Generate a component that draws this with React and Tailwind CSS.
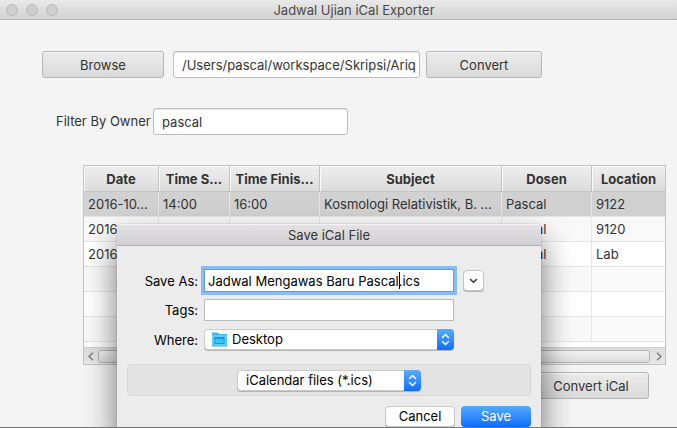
import React from "react";

const columns = [
  { title: "Date", width: "w-[75px]" },
  { title: "Time S...", width: "w-[71px]" },
  { title: "Time Finis...", width: "w-[90px]" },
  { title: "Subject", width: "" },
  { title: "Dosen", width: "w-[90px]" },
  { title: "Location", width: "w-[73px]" },
];

const rows = [
  ["2016-10...", "14:00", "16:00", "Kosmologi Relativistik, B. ...", "Pascal", "9122"],
  ["2016-10...", "", "", "", "Pascal", "9120"],
  ["2016-10...", "", "", "", "Pascal", "Lab"],
  ["", "", "", "", "", ""],
  ["", "", "", "", "", ""],
  ["", "", "", "", "", ""],
];

const rowColour = (i) => (i === 0 ? "bg-[#d1d1d1]" : i % 2 ? "bg-[#f9f9f9]" : "bg-white");

function GreyButton({ children, className }) {
  return (
    <button
      type="button"
      className={`h-[27px] shrink-0 rounded-[3px] border border-[#b5b5b5] bg-linear-to-b from-[#ececec] to-[#dadada] text-center shadow-[inset_0_1px_0_#fafafa] ${className}`}
    >
      {children}
    </button>
  );
}

function Steppers() {
  return (
    <span className="pointer-events-none absolute inset-y-0 right-0 flex w-[17px] items-center justify-center rounded-r-[4px] bg-linear-to-b from-[#58abfb] to-[#0a6cff]">
      <svg width="9" height="13" viewBox="0 0 9 13" fill="none" stroke="white" strokeWidth="1.5" strokeLinecap="round" strokeLinejoin="round">
        <path d="M1.5 4.5 4.5 1.5 7.5 4.5M1.5 8.5 4.5 11.5 7.5 8.5" />
      </svg>
    </span>
  );
}

function FolderIcon() {
  return (
    <svg className="pointer-events-none absolute top-[3px] left-[7px]" width="17" height="15" viewBox="0 0 17 15">
      <path d="M1 0.5h5.5l1.5 1.5h8v12H1z" fill="#3eb7ea" />
      <path d="M1 3h15v11H1z" fill="#5acffa" />
      <path d="M0.5 13.5h16v1h-16z" fill="#45b4df" />
      <rect x="4" y="5.5" width="9" height="6" fill="#43c2f6" stroke="#1498d5" />
      <path d="M3.5 5h10v2h-10z" fill="#1498d5" />
    </svg>
  );
}

function SaveSheet() {
  return (
    <form
      aria-label="Save iCal File"
      onSubmit={(e) => e.preventDefault()}
      className="absolute top-[224px] left-[117px] w-[424px] rounded-t-[4px] bg-[#ececec] pb-3 text-black shadow-[0_16px_32px_rgba(0,0,0,0.55),0_0_1px_rgba(0,0,0,0.6)]"
    >
      <h2 className="h-[22px] rounded-t-[4px] border-b border-[#b4b1b4] bg-linear-to-b from-[#e6e3e6] to-[#d2cfd2] text-center leading-[22px] text-[#333] shadow-[inset_0_1px_0_#f4f2f4]">
        Save iCal File
      </h2>

      <div className="grid grid-cols-[81px_250px_1fr] items-center gap-x-[6px] pt-[23px]">
        <label htmlFor="name" className="text-right">Save As:</label>
        <div className="relative">
          <input
            id="name"
            defaultValue="Jadwal Mengawas Baru Pascal.ics"
            className="block h-[23px] w-full border border-[#5e9ddb] bg-white px-[3px] outline-[3px] outline-[#87bcf5]"
          />
          <span className="absolute top-[3px] left-[195px] h-[17px] w-px bg-black" />
        </div>
        <button
          type="button"
          aria-label="Show more"
          className="ml-[3px] flex h-[21px] w-[21px] items-center justify-center rounded-[4px] border border-[#c4c4c4] bg-white shadow-[0_1px_0_#b5b5b5]"
        >
          <svg width="9" height="6" viewBox="0 0 9 6" fill="none" stroke="#333" strokeWidth="1.5" strokeLinecap="round" strokeLinejoin="round">
            <path d="M1.5 1.5 4.5 4.3 7.5 1.5" />
          </svg>
        </button>
      </div>

      <div className="mt-[7px] grid grid-cols-[81px_250px_1fr] items-center gap-x-[6px]">
        <label htmlFor="tags" className="text-right">Tags:</label>
        <input id="tags" className="block h-[22px] w-full border border-[#bcbcbc] bg-white px-1 outline-none" />
      </div>

      <div className="mt-2 grid grid-cols-[81px_250px_1fr] items-center gap-x-[6px]">
        <label htmlFor="where" className="text-right">Where:</label>
        <div className="relative">
          <select
            id="where"
            className="block h-[21px] w-full appearance-none rounded-[4px] border border-[#cacaca] bg-white pr-5 pl-[27px] leading-[19px] shadow-[0_1px_0_#b5b5b5]"
          >
            <option>Desktop</option>
          </select>
          <FolderIcon />
          <Steppers />
        </div>
      </div>

      <div className="mx-[10px] mt-[14px] flex h-8 items-center justify-center rounded-[4px] border border-[#d8d8d8] bg-[#e3e3e3]">
        <div className="relative w-[184px]">
          <select
            aria-label="File type"
            className="block h-[21px] w-full appearance-none rounded-[4px] border border-[#cacaca] bg-white pr-5 pl-2 leading-[19px] shadow-[0_1px_0_#b5b5b5]"
          >
            <option>iCalendar files (*.ics)</option>
          </select>
          <Steppers />
        </div>
      </div>

      <div className="mt-[10px] flex justify-end gap-[6px] pr-[10px]">
        <button type="button" className="h-[21px] w-[70px] rounded-[4px] border border-[#c8c8c8] bg-white leading-[19px] shadow-[0_1px_0_#b5b5b5]">
          Cancel
        </button>
        <button type="submit" className="h-[21px] w-[70px] rounded-[4px] bg-linear-to-b from-[#55a9fb] to-[#0a6cff] leading-[21px] text-white">
          Save
        </button>
      </div>
    </form>
  );
}

export default function App() {
  return (
    <div className="relative h-screen overflow-hidden border-b border-[#777] bg-[#f4f4f4] font-['Inter',sans-serif] text-[13px] leading-4 text-[#333]">
      <header className="relative flex h-5 items-center justify-center border-b border-[#b3b3b3] bg-linear-to-b from-[#e9e9e9] to-[#d3d3d3]">
        <div className="absolute left-[6px] flex gap-2">
          <span className="size-3 rounded-full border border-[#b9b9b9] bg-[#cecece]" />
          <span className="size-3 rounded-full border border-[#b9b9b9] bg-[#cecece]" />
          <span className="size-3 rounded-full border border-[#b9b9b9] bg-[#cecece]" />
        </div>
        <h1 className="pl-[31px] text-[#4a4a4a]">Jadwal Ujian iCal Exporter</h1>
      </header>

      <main>
        <div className="flex pt-[31px] pl-[42px]">
          <GreyButton className="w-[122px]">Browse</GreyButton>
          <input
            aria-label="Source file"
            defaultValue="/Users/pascal/workspace/Skripsi/Ariq"
            className="ml-[9px] h-[27px] w-[247px] rounded-[3px] border border-[#bebebe] bg-white pr-0 pl-2 shadow-[inset_0_1px_1px_#e4e4e4] outline-none"
          />
          <GreyButton className="ml-[6px] w-[116px]">Convert</GreyButton>
        </div>

        <div className="flex items-center pt-[30px] pl-14">
          <label htmlFor="owner" className="w-[97px] pb-[2px] whitespace-nowrap">Filter By Owner</label>
          <input
            id="owner"
            defaultValue="pascal"
            className="h-[27px] w-[195px] rounded-[3px] border border-[#bebebe] bg-white px-2 shadow-[inset_0_1px_1px_#e4e4e4] outline-none"
          />
        </div>

        <div className="mt-[30px] mr-[11px] ml-[83px] border border-[#c3c3c3] bg-white">
          <table className="w-full table-fixed border-separate border-spacing-0">
            <thead>
              <tr className="h-[26px]">
                {columns.map((c) => (
                  <th
                    key={c.title}
                    className={`${c.width} overflow-hidden border-r border-b border-[#c3c3c3] bg-linear-to-b from-[#eeeeee] to-[#dcdcdc] p-0 text-center font-bold whitespace-nowrap shadow-[inset_1px_1px_0_#fafafa] last:border-r-0`}
                  >
                    {c.title}
                  </th>
                ))}
              </tr>
            </thead>
            <tbody>
              {rows.map((r, i) => (
                <tr key={i} className={`h-[25px] ${rowColour(i)}`}>
                  {r.map((cell, j) => (
                    <td key={j} className="overflow-hidden border-r border-b border-[#e6e6e6] p-0 pl-1 whitespace-nowrap last:border-r-0">
                      {cell}
                    </td>
                  ))}
                </tr>
              ))}
            </tbody>
          </table>
          <div className="mt-[5px] flex h-[17px] items-center border-t border-[#d0d0d0] bg-linear-to-b from-[#dedede] to-[#e8e8e8]">
            <svg className="mx-1" width="6" height="9" viewBox="0 0 6 9" fill="none" stroke="#777" strokeWidth="1.3">
              <path d="M5 0.7 1 4.5 5 8.3" />
            </svg>
            <span className="h-[13px] grow rounded-[3px] border border-[#b4b4b4] bg-linear-to-b from-[#f2f2f2] to-[#dddddd]" />
            <svg className="mr-[3px] ml-[6px]" width="6" height="9" viewBox="0 0 6 9" fill="none" stroke="#777" strokeWidth="1.3">
              <path d="M1 0.7 5 4.5 1 8.3" />
            </svg>
          </div>
        </div>

        <div className="mt-[7px] flex justify-end pr-7">
          <GreyButton className="w-[116px]">Convert iCal</GreyButton>
        </div>
      </main>

      <SaveSheet />
    </div>
  );
}
